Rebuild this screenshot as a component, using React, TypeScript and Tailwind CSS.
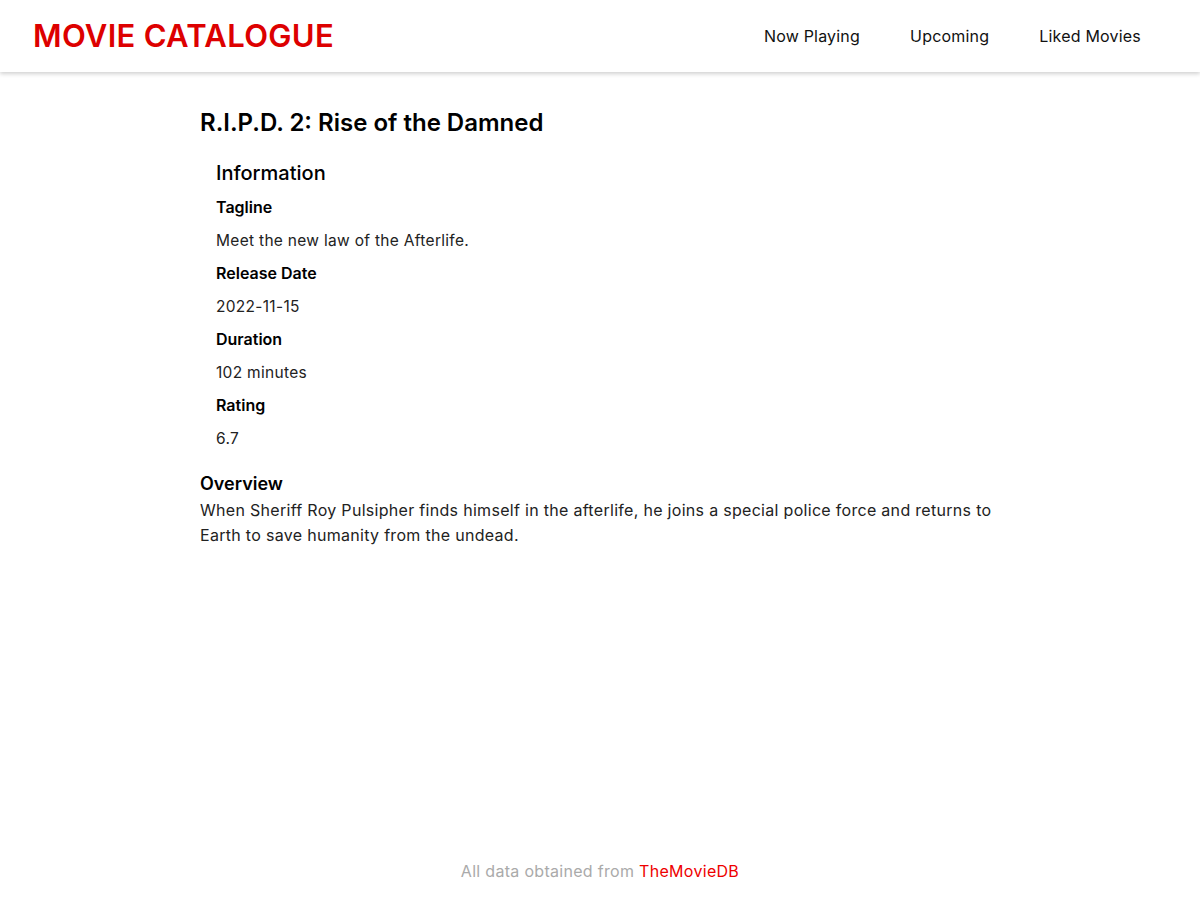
const movie = {
  title: "R.I.P.D. 2: Rise of the Damned",
  tagline: "Meet the new law of the Afterlife.",
  releaseDate: "2022-11-15",
  duration: "102 minutes",
  rating: "6.7",
  overview:
    "When Sheriff Roy Pulsipher finds himself in the afterlife, he joins a special police force and returns to Earth to save humanity from the undead.",
};

const navLinks = ["Now Playing", "Upcoming", "Liked Movies"];

function Header() {
  return (
    <header className="flex h-[72px] items-center justify-between bg-white px-[33px] shadow-[0_2px_4px_rgba(0,0,0,0.18)]">
      <h1 className="text-[31px] font-semibold tracking-[0.3px] text-[#dd0000]">MOVIE CATALOGUE</h1>
      <nav className="flex items-center gap-[50px] pr-[26px]">
        {navLinks.map((link) => (
          <a key={link} href="#" className="text-[16px] tracking-[0.2px] text-[#111]">
            {link}
          </a>
        ))}
      </nav>
    </header>
  );
}

export default function App() {
  const info = [
    { label: "Tagline", value: movie.tagline },
    { label: "Release Date", value: movie.releaseDate },
    { label: "Duration", value: movie.duration },
    { label: "Rating", value: movie.rating },
  ];

  return (
    <div className="flex min-h-screen flex-col bg-white font-['Inter',sans-serif] text-black">
      <Header />

      <main className="mx-auto w-[800px] flex-1 pt-[35px]">
        <h2 className="text-[24px] font-semibold leading-8">{movie.title}</h2>

        <section className="mt-[20px] pl-4">
          <h3 className="text-[20px] font-medium leading-7">Information</h3>
          <dl className="mt-1">
            {info.map((item) => (
              <div key={item.label}>
                <dt className="text-[16px] font-semibold leading-[33px]">{item.label}</dt>
                <dd className="text-[15.5px] leading-[33px] tracking-[0.3px] text-[#222]">{item.value}</dd>
              </div>
            ))}
          </dl>
        </section>

        <section className="mt-[17px]">
          <h3 className="text-[18px] font-semibold leading-6">Overview</h3>
          <p className="mt-[2px] text-[16px] leading-[25px] tracking-[0.3px] text-[#222]">{movie.overview}</p>
        </section>
      </main>

      <footer className="py-[17px] text-center text-[16px] leading-6 tracking-[0.3px] text-[#aaa]">
        All data obtained from{" "}
        <a href="#" className="text-[#ee0000]">
          TheMovieDB
        </a>
      </footer>
    </div>
  );
}
